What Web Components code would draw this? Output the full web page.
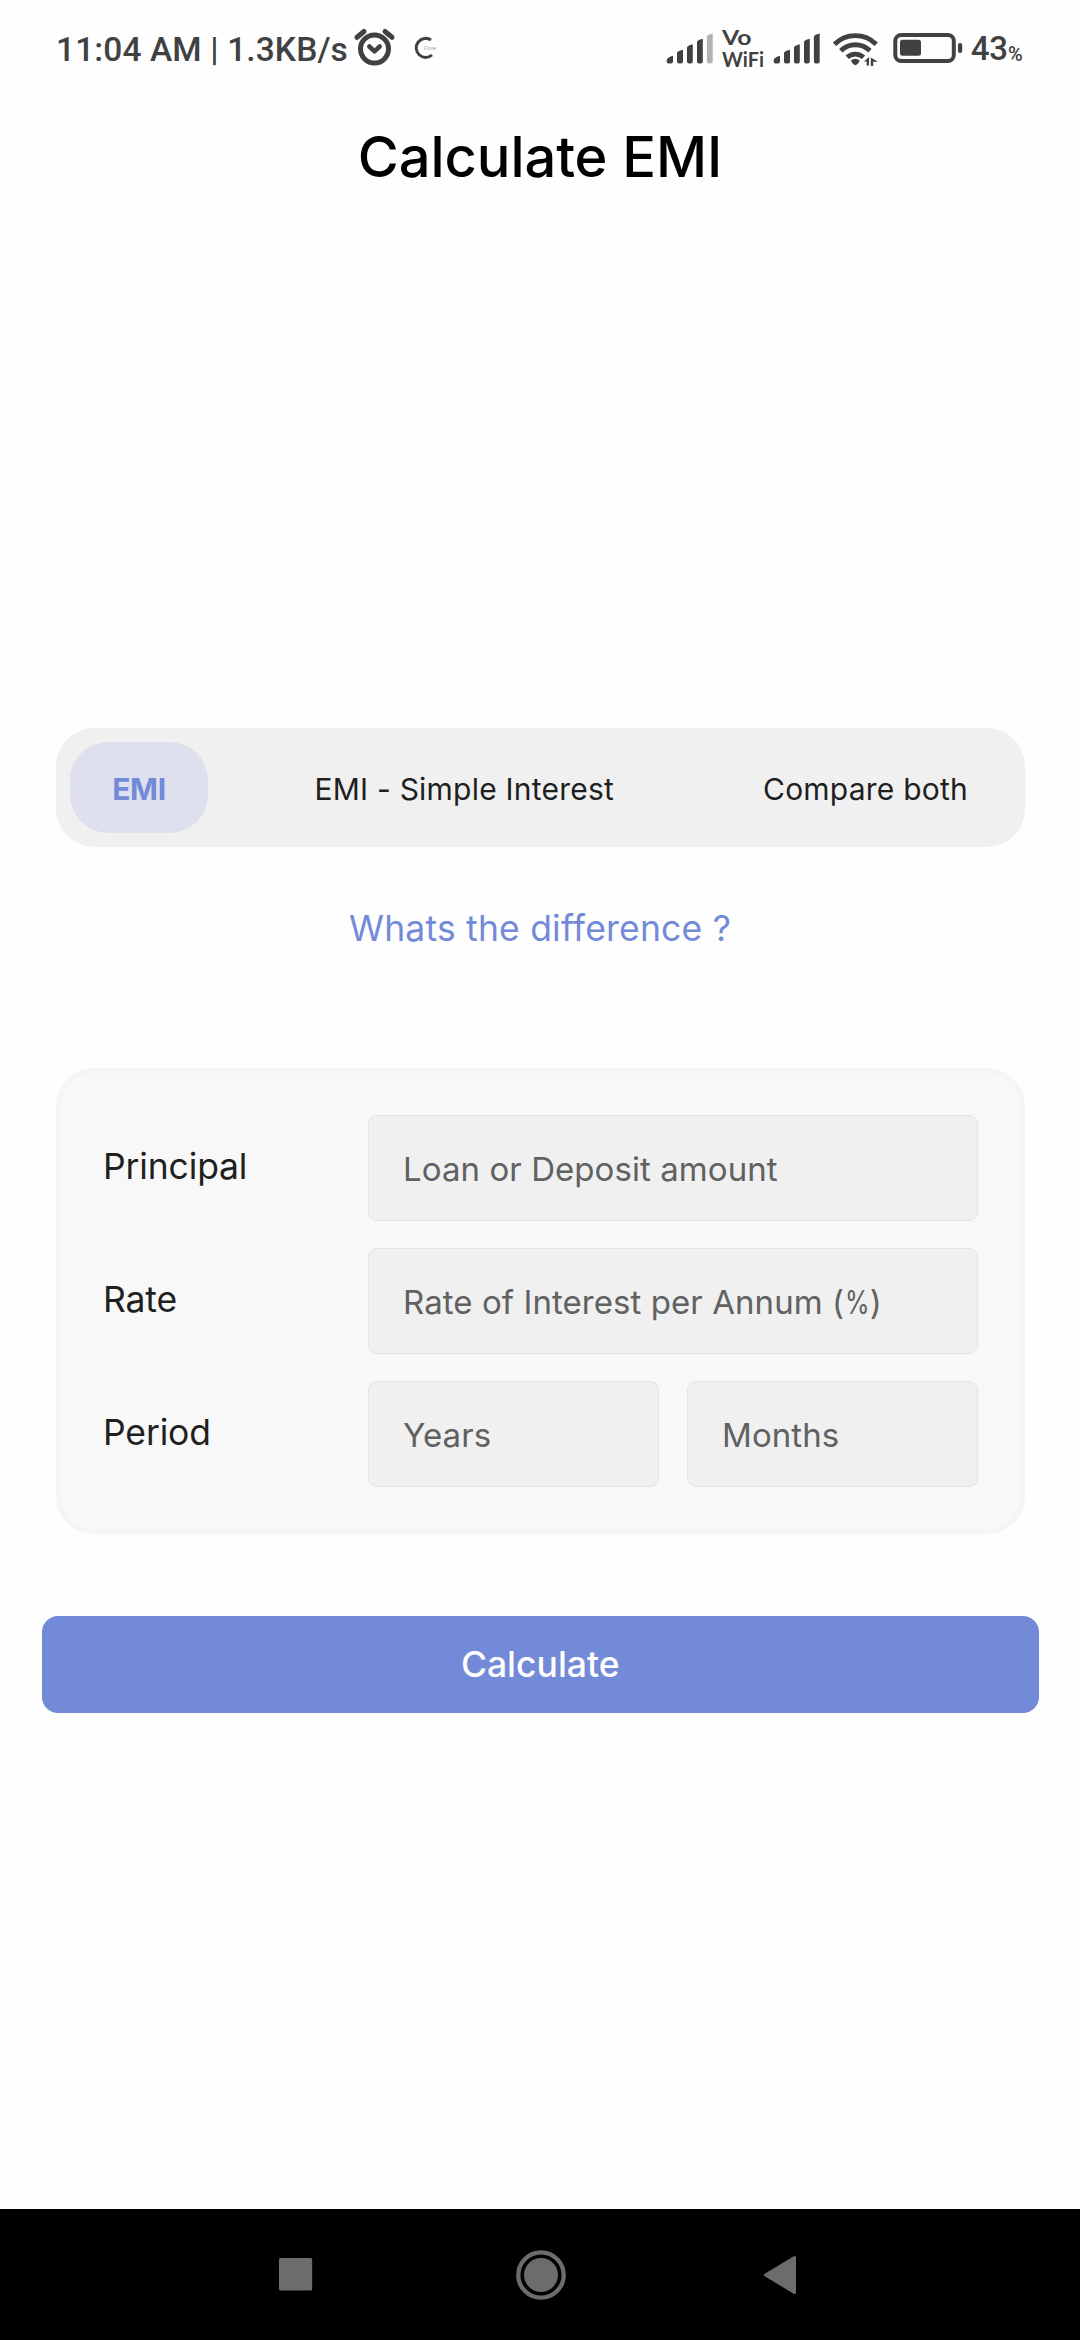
<!DOCTYPE html>
<html lang="en">
<head>
<meta charset="utf-8">
<title>Calculate EMI</title>
<style>
html, body { margin: 0; background: #fefefe; }
body { font-family: Inter, "Liberation Sans", sans-serif; }
</style>
</head>
<body>
<emi-app></emi-app>
<script>
const define = (name, html) => {
  const t = document.createElement('template');
  t.innerHTML = html;
  customElements.define(name, class extends HTMLElement {
    constructor() {
      super();
      this.attachShadow({ mode: 'open' }).append(t.content.cloneNode(true));
    }
  });
};

const bars = (lastOpacity) => `
  <g fill="#414141">
    <path d="M0 28V26.500Q1 23.500 6.300 22.300V28Q6.300 30 4.300 30H2Q0 30 0 28Z"/>
    <path d="M10.300 28V19Q12 17 16.300 16.300V28Q16.300 30 14.300 30H12.300Q10.300 30 10.300 28Z"/>
    <path d="M20.300 28V13.500Q22 11.500 26.100 10.800V28Q26.100 30 24.100 30H22.300Q20.300 30 20.300 28Z"/>
    <path d="M30.300 28V8Q32 6 36.100 5.300V28Q36.100 30 34.100 30H32.300Q30.300 30 30.300 28Z"/>
    <path opacity="${lastOpacity}" d="M40.200 28V2.700Q42 .700 46 0V28Q46 30 44 30H42.200Q40.200 30 40.200 28Z"/>
  </g>`;

define('status-bar', `
<style>
:host { display: flex; align-items: flex-start; justify-content: space-between; box-sizing: border-box;
  height: 96px; padding: 0 56px; color: #414141; font: 500 33.500px/40px Roboto, "Liberation Sans", sans-serif; }
.side { display: flex; align-items: flex-start; }
.right { width: 364px; }
.txt { padding-top: 30px; white-space: pre; }
.clock { width: 294px; letter-spacing: .120px; }
.level { font-size: 33px; letter-spacing: -.300px; padding: 29px 0 0 .700px; }
.unit { font-size: 20px; padding: 34px 0 0 .500px; }
svg { display: block; flex: none; }
svg text { fill: #414141; }
</style>
<div class="side">
  <span class="txt clock">11:04 AM | 1.3KB/s</span>
  <svg width="92" height="96" viewBox="350 0 92 96" fill="none" stroke="#414141">
    <circle cx="374.500" cy="49" r="14" stroke-width="5"/>
    <path d="M357 37.300L364 31.500M392 37.300L385 31.500" stroke-width="5" stroke-linecap="round"/>
    <path d="M369.300 46.500L374.500 51.300L379.700 46.500" stroke-width="4.500" stroke-linecap="round" stroke-linejoin="round"/>
    <path d="M431 40A9.500 9.500 0 1 0 432 55" stroke-width="3"/>
    <text x="424" y="50" style="fill:#bbb" stroke="none" font-size="6" textLength="12.500">Flow</text>
  </svg>
</div>
<div class="side right">
  <svg width="310" height="96" viewBox="660 0 310 96">
    <g transform="translate(666.700 33.500)">${bars(.4)}</g>
    <g transform="translate(773.700 33.500)">${bars(1)}</g>
    <text x="722" y="45.300" font-family="Lato" font-weight="700" font-size="21.500" textLength="29.500" lengthAdjust="spacingAndGlyphs">Vo</text>
    <text x="722" y="66.500" font-family="Lato" font-weight="700" font-size="20.500" textLength="42" lengthAdjust="spacingAndGlyphs">WiFi</text>
    <g fill="none" stroke="#414141" stroke-width="4.800">
      <path d="M834.500 44.200A29.500 29.500 0 0 1 876.200 44.200"/>
      <path d="M840.800 50.800A20.500 20.500 0 0 1 869.900 50.800"/>
      <path d="M847.200 57.300A11.800 11.800 0 0 1 863.500 57.300"/>
    </g>
    <path d="M851 60.300Q855.300 57 859.600 60.300Q859 63.500 856.500 64.700Q855.300 65.200 854.100 64.700Q851.600 63.500 851 60.300Z" fill="#414141"/>
    <path d="M864 61.500L869 57V65.500H866.700V61.500ZM870.800 57.500L878 61.800H873.200V66H870.800Z" fill="#414141"/>
    <rect x="895.300" y="35" width="58.500" height="26" rx="6" fill="none" stroke="#414141" stroke-width="4"/>
    <rect x="900" y="39.800" width="21" height="16" rx="2.500" fill="#414141"/>
    <rect x="957.900" y="43" width="4.300" height="10" rx="2" fill="#414141"/>
  </svg>
  <span class="txt level">43</span><span class="txt unit">%</span>
</div>`);

define('page-title', `
<style>:host { display: block; text-align: center; color: #000; font-size: 56px; font-weight: 500; letter-spacing: -.080px; line-height: 68px; padding-top: 27px; height: 605px; }</style><slot></slot>`);

define('tab-item', `
<style>
:host { display: flex; align-items: center; justify-content: center; height: 91px; border-radius: 38px; color: #1f1f1f; font-size: 30px; letter-spacing: .220px; box-sizing: border-box; padding-top: 2px; white-space: pre; }
:host([active]) { background: #dee0ed; color: #738ad8; font-weight: 700; letter-spacing: -.300px; }
</style><span><slot></slot></span>`);

define('tab-strip', `
<style>
:host { display: flex; box-sizing: border-box; margin: 0 55.500px 0 56px; padding: 14px; height: 119px; border-radius: 38px; background: #f0f0f0; justify-content: space-between; }
::slotted(:nth-child(1)) { width: 138px; }
::slotted(:nth-child(2)) { width: 400px; }
::slotted(:nth-child(3)) { width: 290px; }
</style><slot></slot>`);

define('help-link', `
<style>:host { display: block; text-align: center; color: #738ad8; font-size: 35.500px; letter-spacing: .200px; line-height: 44px; padding: 60px 0 117px; }</style><slot></slot>`);

define('form-card', `
<style>:host { display: flex; flex-direction: column; gap: 27px; box-sizing: border-box; margin: 0 55.500px 0 56px; height: 466px; padding: 42px 41.500px 0 42px; border: 5px solid #f5f5f5; border-radius: 38px; background: #f8f8f8; }</style><slot></slot>`);

define('form-row', `
<style>
:host { display: flex; height: 106px; }
.label { width: 265px; flex: none; color: #1f1f1f; font-size: 35.500px; letter-spacing: -.150px; line-height: 104px; }
.fields { display: flex; flex: 1; gap: 28px; }
</style><div class="label"><slot name="label"></slot></div><div class="fields"><slot></slot></div>`);

define('text-field', `<style>
:host { display: block; flex: 1; box-sizing: border-box; border: 1px solid #e3e3e3; border-radius: 9px; background: #f0f0f0; padding-left: 34px; color: #616161; font-size: 33px; line-height: 107px; white-space: nowrap; letter-spacing: .070px; }
::slotted(.percent) { display: inline-block; transform: scaleX(.76); margin: 0 -3.500px; }
</style><slot></slot>`);

define('primary-button', `
<style>:host { display: block; box-sizing: border-box; margin: 82px 41.500px 0 42px; height: 97px; border-radius: 16px; background: #738ad8; color: #fff; text-align: center; font-size: 35.500px; font-weight: 500; line-height: 98px; }</style><slot></slot>`);

define('nav-bar', `
<style>:host { display: flex; justify-content: center; margin-top: auto; height: 131px; background: #000; } svg { display: block; }</style>
<svg width="1080" height="131" viewBox="0 2209 1080 131" fill="#6c6c6c">
  <rect x="279" y="2258" width="33.200" height="32.500" rx="1.500"/>
  <circle cx="541" cy="2275" r="22.700" fill="none" stroke="#6c6c6c" stroke-width="4.300"/>
  <circle cx="541" cy="2275" r="17"/>
  <path d="M765.500 2275L794.500 2257.500V2292.500Z" stroke="#6c6c6c" stroke-width="3" stroke-linejoin="round"/>
</svg>`);

define('emi-app', `
<style>:host { display: flex; flex-direction: column; width: 1080px; height: 2340px; background: #fefefe; }</style>
<status-bar></status-bar>
<page-title>Calculate EMI</page-title>
<tab-strip><tab-item active>EMI</tab-item><tab-item>EMI - Simple Interest</tab-item><tab-item>Compare both</tab-item></tab-strip>
<help-link>Whats the difference ?</help-link>
<form-card>
  <form-row><span slot="label">Principal</span><text-field>Loan or Deposit amount</text-field></form-row>
  <form-row><span slot="label">Rate</span><text-field>Rate of Interest per Annum (<span class="percent">%</span>)</text-field></form-row>
  <form-row><span slot="label">Period</span><text-field>Years</text-field><text-field>Months</text-field></form-row>
</form-card>
<primary-button>Calculate</primary-button>
<nav-bar></nav-bar>`);
</script>
</body>
</html>
